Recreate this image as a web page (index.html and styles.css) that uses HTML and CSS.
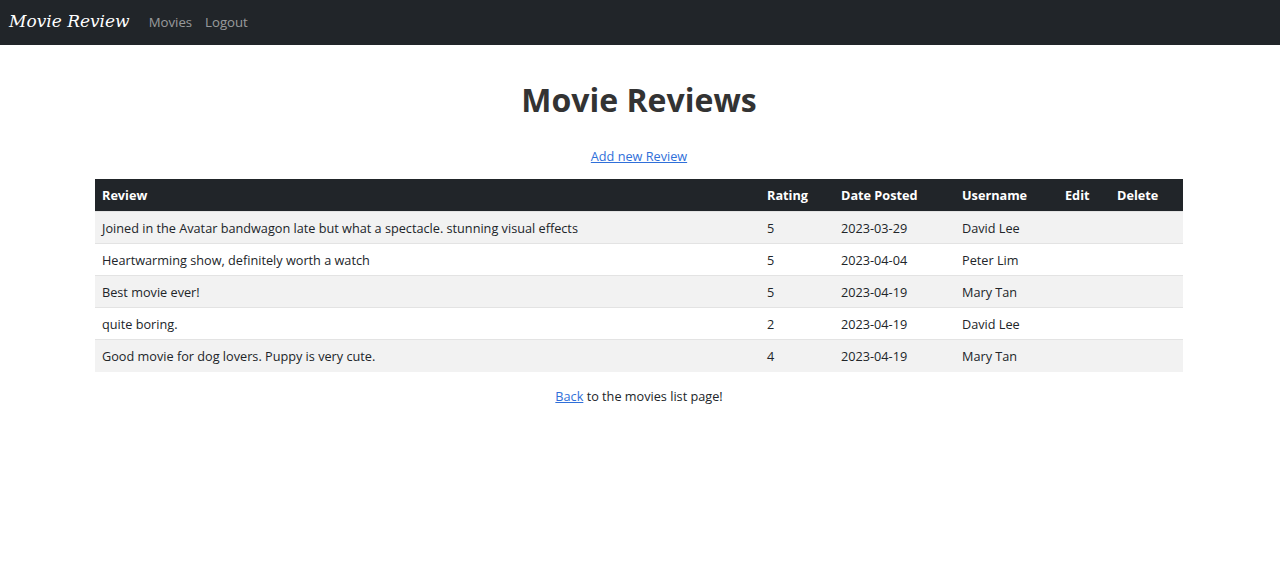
FILE: index.html
```html
<!DOCTYPE html>
<html lang="en">
<head>
<meta charset="utf-8">
<title>Movie Reviews</title>
<link rel="stylesheet" href="styles.css">
</head>
<body>
<nav class="navbar">
  <a class="brand" href="#">Movie Review</a>
  <a class="nav-link" href="#">Movies</a>
  <a class="nav-link" href="#">Logout</a>
</nav>
<main class="container">
  <h1 class="title">Movie Reviews</h1>
  <p class="center add"><a href="#">Add new Review</a></p>
  <table class="reviews">
    <colgroup>
      <col class="c-review"><col class="c-rating"><col class="c-date"><col class="c-user"><col class="c-edit"><col class="c-delete">
    </colgroup>
    <thead>
      <tr><th>Review</th><th>Rating</th><th>Date Posted</th><th>Username</th><th>Edit</th><th>Delete</th></tr>
    </thead>
    <tbody>
      <tr><td>Joined in the Avatar bandwagon late but what a spectacle. stunning visual effects</td><td>5</td><td>2023-03-29</td><td>David Lee</td><td></td><td></td></tr>
      <tr><td>Heartwarming show, definitely worth a watch</td><td>5</td><td>2023-04-04</td><td>Peter Lim</td><td></td><td></td></tr>
      <tr><td>Best movie ever!</td><td>5</td><td>2023-04-19</td><td>Mary Tan</td><td></td><td></td></tr>
      <tr><td>quite boring.</td><td>2</td><td>2023-04-19</td><td>David Lee</td><td></td><td></td></tr>
      <tr><td>Good movie for dog lovers. Puppy is very cute.</td><td>4</td><td>2023-04-19</td><td>Mary Tan</td><td></td><td></td></tr>
    </tbody>
  </table>
  <p class="center back"><a href="#">Back</a> to the movies list page!</p>
</main>
</body>
</html>
```
FILE: styles.css
```css
* { box-sizing: border-box; }
body {
  margin: 0;
  font-family: "Open Sans", "Noto Sans", sans-serif;
  font-size: 12.7px;
  color: #212529;
  background: #fff;
}
.navbar {
  height: 45px;
  background: #212529;
  display: flex;
  align-items: center;
  padding: 0 9px;
}
.brand {
  font-family: "DejaVu Serif", serif;
  font-style: italic;
  font-size: 17px;
  color: #fff;
  text-decoration: none;
  margin-right: 19px;
  margin-top: -3px;
}
.nav-link {
  color: rgba(255,255,255,0.55);
  text-decoration: none;
  font-size: 13.2px;
  margin-right: 13px;
  margin-top: -2px;
}
.container {
  width: 1088px;
  margin: 0 0 0 95px;
}
.title {
  text-align: center;
  font-size: 32px;
  font-weight: 700;
  color: #333;
  margin: 33px 0 0;
  line-height: 44px;
}
.center { text-align: center; }
.add { margin: 23px 0 0; line-height: 22px; }
a { color: #2f6fd9; }
.reviews {
  width: 100%;
  border-collapse: collapse;
  table-layout: fixed;
  margin-top: 12px;
}
.c-review { width: 665px; }
.c-rating { width: 74px; }
.c-date { width: 121px; }
.c-user { width: 103px; }
.c-edit { width: 52px; }
.c-delete { width: 73px; }
.reviews th, .reviews td {
  text-align: left;
  padding: 1px 7px 0;
  height: 32px;
  white-space: nowrap;
}
.reviews thead th {
  background: #212529;
  color: #fff;
  font-weight: 700;
}
.reviews tbody td { border-top: 1px solid #e3e3e3; }
.reviews tbody tr:nth-child(odd) td { background: #f2f2f2; }
.reviews tbody tr:last-child td { height: 33px; }
.back { margin: 13px 0 0; line-height: 22px; }
```
